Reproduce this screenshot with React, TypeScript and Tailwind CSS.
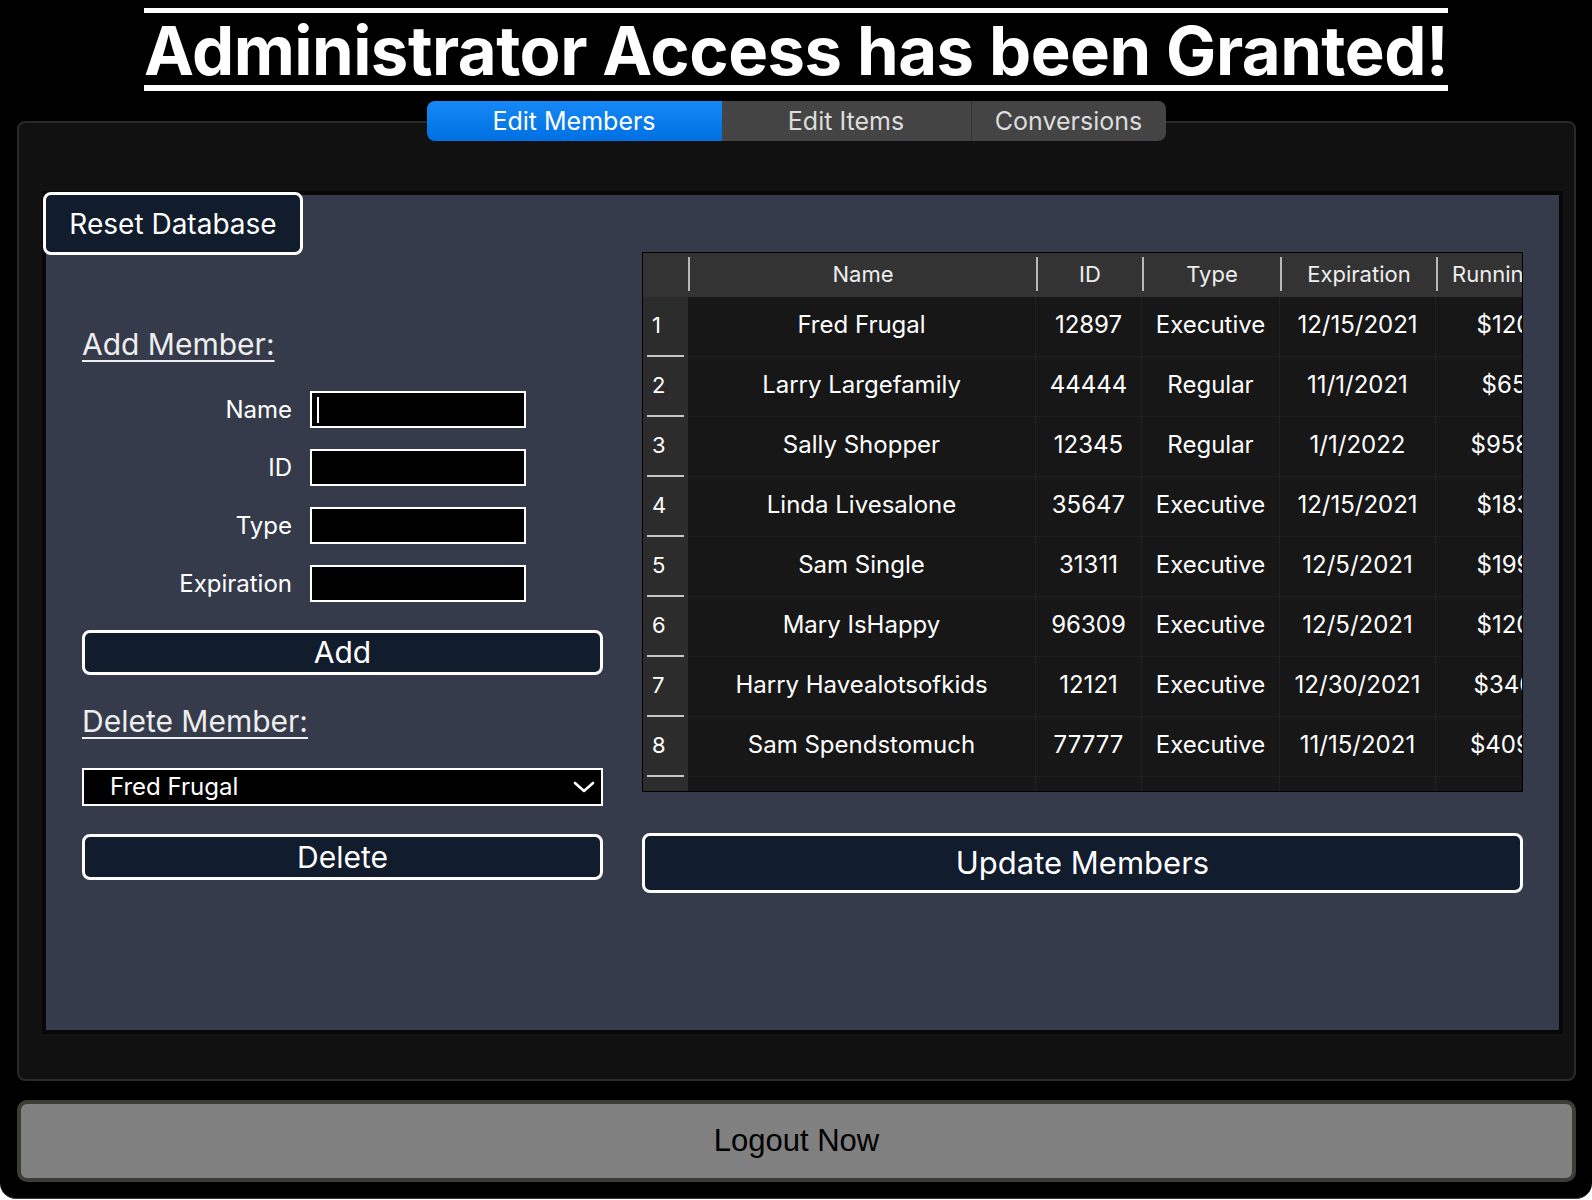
import React from 'react';

const members = [
  { name: 'Fred Frugal', id: '12897', type: 'Executive', exp: '12/15/2021', total: '$120.00' },
  { name: 'Larry Largefamily', id: '44444', type: 'Regular', exp: '11/1/2021', total: '$65.00' },
  { name: 'Sally Shopper', id: '12345', type: 'Regular', exp: '1/1/2022', total: '$958.125' },
  { name: 'Linda Livesalone', id: '35647', type: 'Executive', exp: '12/15/2021', total: '$183.00' },
  { name: 'Sam Single', id: '31311', type: 'Executive', exp: '12/5/2021', total: '$199.00' },
  { name: 'Mary IsHappy', id: '96309', type: 'Executive', exp: '12/5/2021', total: '$120.00' },
  { name: 'Harry Havealotsofkids', id: '12121', type: 'Executive', exp: '12/30/2021', total: '$340.00' },
  { name: 'Sam Spendstomuch', id: '77777', type: 'Executive', exp: '11/15/2021', total: '$409.125' },
];

const headers = [
  { label: 'Name', w: 'w-[346px]' },
  { label: 'ID', w: 'w-[104px]' },
  { label: 'Type', w: 'w-[136px]' },
  { label: 'Expiration', w: 'w-[154px]' },
  { label: 'Running Total', w: 'w-[170px]' },
];

function HeaderCell({ label, w }: { label: string; w: string }) {
  return (
    <>
      <div className="w-[2px] h-[34px] bg-[#b8b8b8] shrink-0" />
      <div className={`${w} shrink-0 text-center text-[22px] text-[#eeeeee] whitespace-nowrap`}>{label}</div>
    </>
  );
}

function MemberTable() {
  return (
    <div className="w-[881px] h-[540px] border border-black bg-[#171717] overflow-hidden">
      <div className="flex items-center h-[44px] bg-[#333333] w-[1200px] pb-[2px]">
        <div className="w-[45px] shrink-0" />
        {headers.map((h) => (
          <HeaderCell key={h.label} label={h.label} w={h.w} />
        ))}
      </div>
      {members.map((m, i) => (
        <div key={m.id + i} className="flex h-[60px] w-[1200px] text-[24px] text-white">
          <div className="w-[45px] shrink-0 bg-[#2c2c2c] flex flex-col">
            <div className="flex-1 flex items-center pl-[9px] pb-[2px] text-[22px]">{i + 1}</div>
            <div className="h-[2px] mx-[4px] bg-[#c4c4c4]" />
          </div>
          <div className="w-[348px] shrink-0 flex items-center justify-center pb-[3px] border-r border-b border-[#202020] whitespace-nowrap">{m.name}</div>
          <div className="w-[106px] shrink-0 flex items-center justify-center pb-[3px] border-r border-b border-[#202020]">{m.id}</div>
          <div className="w-[138px] shrink-0 flex items-center justify-center pb-[3px] border-r border-b border-[#202020]">{m.type}</div>
          <div className="w-[156px] shrink-0 flex items-center justify-center pb-[3px] border-r border-b border-[#202020]">{m.exp}</div>
          <div className="w-[172px] shrink-0 flex items-center justify-center pb-[3px] border-b border-[#202020] whitespace-nowrap">{m.total}</div>
        </div>
      ))}
      <div className="flex h-[14px] w-[1200px]">
        <div className="w-[45px] shrink-0 bg-[#2c2c2c]" />
        <div className="w-[348px] shrink-0 border-r border-[#202020]" />
        <div className="w-[106px] shrink-0 border-r border-[#202020]" />
        <div className="w-[138px] shrink-0 border-r border-[#202020]" />
        <div className="w-[156px] shrink-0 border-r border-[#202020]" />
      </div>
    </div>
  );
}

function Field({ label, caret }: { label: string; caret?: boolean }) {
  return (
    <div className="flex items-center">
      <label className="w-[228px] text-right text-[24px] text-white pr-[18px]">{label}</label>
      <div className="w-[216px] h-[37px] bg-black border-2 border-white flex items-center pl-[5px]">
        {caret && <div className="w-[2px] h-[26px] bg-white" />}
      </div>
    </div>
  );
}

function NavyButton({ children, className }: { children: React.ReactNode; className: string }) {
  return (
    <button className={`w-full bg-[#111c2d] border-[3px] border-white rounded-[8px] text-white flex items-center justify-center ${className}`}>
      {children}
    </button>
  );
}

export default function App() {
  return (
    <div className="min-h-[1199px] bg-black text-white font-['Inter','Noto_Sans',sans-serif] flex flex-col items-center border-b border-[#3a3a3a] rounded-b-[16px]">
      <h1 className="mt-[8px] border-t-[5px] border-b-[6px] border-white pt-[4px] text-[67px] leading-[68px] font-bold tracking-[-0.5px] whitespace-nowrap">
        Administrator Access has been Granted!
      </h1>

      <div className="mt-[10px] -mb-[20px] relative z-10 flex h-[40px] rounded-[8px] overflow-hidden text-[25px]">
        <div className="w-[295px] flex items-center justify-center pt-[2px] bg-gradient-to-b from-[#1688f7] to-[#0070e2] text-white">Edit Members</div>
        <div className="w-[250px] flex items-center justify-center pt-[2px] bg-[#444444] border-r border-[#333333] text-[#dddddd]">Edit Items</div>
        <div className="w-[194px] flex items-center justify-center pt-[2px] bg-[#444444] text-[#dddddd]">Conversions</div>
      </div>

      <div className="self-stretch ml-[17px] mr-[16px] h-[960px] bg-[#111111] border-2 border-[#2a2a2a] rounded-[8px] pt-[68px] pl-[23px]">
        <div className="relative w-[1521px] h-[843px] bg-[#353b4b] border-4 border-[#070707]">
          <button className="absolute -left-[3px] -top-[3px] w-[260px] h-[63px] bg-[#111c2d] border-[3px] border-white rounded-[8px] text-[28px] text-white flex items-center justify-center">
            Reset Database
          </button>

          <div className="flex pl-[36px] pt-[57px]">
            <div className="w-[521px] flex flex-col">
              <h2 className="mt-[74px] text-[30px] leading-[36px] text-[#eeeeee] underline decoration-2 underline-offset-[5px] self-start">
                Add Member:
              </h2>
              <div className="mt-[29px] flex flex-col gap-[21px]">
                <Field label="Name" caret />
                <Field label="ID" />
                <Field label="Type" />
                <Field label="Expiration" />
              </div>
              <NavyButton className="mt-[28px] h-[45px] text-[30px]">Add</NavyButton>

              <h2 className="mt-[28px] text-[30px] leading-[36px] text-[#eeeeee] underline decoration-2 underline-offset-[5px] self-start">
                Delete Member:
              </h2>
              <div className="mt-[29px] h-[38px] bg-black border-2 border-white flex items-center justify-between pl-[26px] pr-[5px] text-[24px] text-white">
                <span>Fred Frugal</span>
                <svg width="24" height="16" viewBox="0 0 24 16" fill="none" stroke="white" strokeWidth="2.6" strokeLinecap="round" strokeLinejoin="round">
                  <path d="M3 4 L12 12 L21 4" />
                </svg>
              </div>
              <NavyButton className="mt-[28px] h-[46px] text-[30px]">Delete</NavyButton>
            </div>

            <div className="ml-[39px] w-[881px] flex flex-col">
              <MemberTable />
              <NavyButton className="mt-[41px] h-[60px] text-[31px]">Update Members</NavyButton>
            </div>
          </div>
        </div>
      </div>

      <button className="self-stretch mt-[19px] ml-[17px] mr-[16px] h-[82px] bg-[#808080] border-4 border-[#3b3e33] rounded-[10px] text-black text-[31px] font-['Liberation_Sans',sans-serif] flex items-center justify-center">
        Logout Now
      </button>
    </div>
  );
}
